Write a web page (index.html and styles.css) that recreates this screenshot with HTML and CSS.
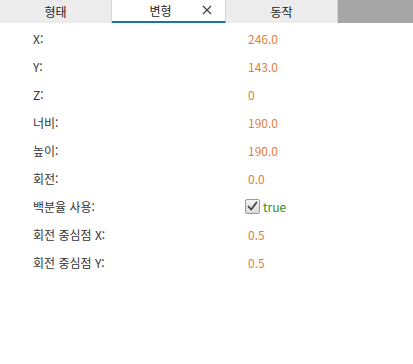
FILE: index.html
```html
<!DOCTYPE html>
<html lang="ko">
<head>
<meta charset="utf-8">
<link rel="stylesheet" href="styles.css">
</head>
<body>
<div class="tabs">
  <div class="tab">형태</div>
  <div class="tab active"><span>변형</span><svg class="close" width="10" height="10" viewBox="0 0 10 10"><path d="M1 1 L9 9 M9 1 L1 9" stroke="#444" stroke-width="1.3" fill="none"/></svg></div>
  <div class="tab">동작</div>
  <div class="filler"></div>
</div>
<div class="props">
  <div class="row"><span class="label">X:</span><span class="val">246.0</span></div>
  <div class="row"><span class="label">Y:</span><span class="val">143.0</span></div>
  <div class="row"><span class="label">Z:</span><span class="val">0</span></div>
  <div class="row"><span class="label">너비:</span><span class="val">190.0</span></div>
  <div class="row"><span class="label">높이:</span><span class="val">190.0</span></div>
  <div class="row"><span class="label">회전:</span><span class="val">0.0</span></div>
  <div class="row"><span class="label">백분율 사용:</span><span class="check"><span class="box"><svg width="13" height="13" viewBox="0 0 13 13"><path d="M2.5 6.5 L5.2 9.5 L10.5 2.5" fill="none" stroke="#444" stroke-width="1.8" stroke-linecap="round" stroke-linejoin="round"/></svg></span><span class="bool">true</span></span></div>
  <div class="row"><span class="label">회전 중심점 X:</span><span class="val">0.5</span></div>
  <div class="row"><span class="label">회전 중심점 Y:</span><span class="val">0.5</span></div>
</div>
</body>
</html>
```

FILE: styles.css
```css
html, body {
  margin: 0;
  padding: 0;
  background: #fff;
  font-family: "Noto Sans CJK KR", "Noto Sans", sans-serif;
  font-size: 12px;
  color: #333;
}
.tabs {
  display: flex;
  height: 23px;
}
.tab {
  width: 112px;
  background: #ececec;
  border-right: 1px solid #d6d6d6;
  box-sizing: border-box;
  display: flex;
  align-items: center;
  justify-content: center;
  font-size: 12px;
  color: #222;
  height: 23px;
}
.tab.active {
  width: 114px;
  background: #fff;
  border-bottom: 2px solid #1a6fb5;
  padding-right: 16px;
  position: relative;
}
.tab.active .close {
  position: absolute;
  right: 13px;
  top: 5px;
}
.filler {
  flex: 1;
  background: #a5a5a5;
}
.props {
  padding-top: 1px;
}
.row {
  display: flex;
  align-items: center;
  height: 28px;
}
.label {
  width: 215px;
  padding-left: 33px;
  color: #333;
}
.val {
  color: #e07f3c;
}
.check {
  display: flex;
  align-items: center;
  margin-left: -3px;
}
.box {
  width: 13px;
  height: 13px;
  border: 1px solid #9a9a9a;
  border-radius: 2px;
  background: linear-gradient(#f4f4f4, #dcdcdc);
  display: inline-flex;
  margin-right: 3px;
}
.bool {
  color: #2e8b1e;
}
```
